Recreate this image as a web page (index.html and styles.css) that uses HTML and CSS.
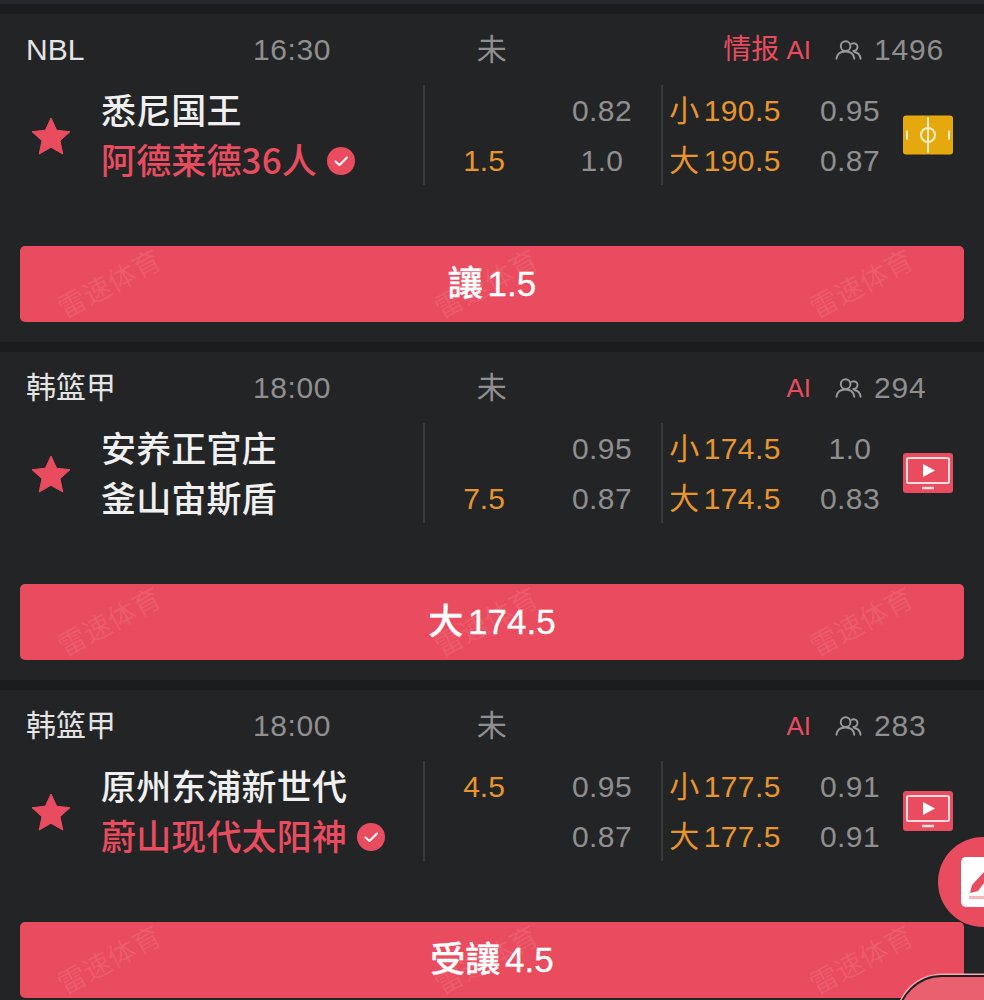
FILE: index.html
```html
<!DOCTYPE html>
<html lang="zh-CN">
<head>
    <meta charset="UTF-8">
    <meta name="viewport" content="width=device-width, initial-scale=1.0">
    <title>雷速体育 - 篮球</title>
    <link rel="stylesheet" href="styles.css">
</head>
<body>
    <svg class="sprites" aria-hidden="true">
        <symbol id="star" viewBox="0 0 40 38">
            <path d="M20 1 25.600 13.200 39 14.700 29 23.700 31.800 37 20 30.300 8.200 37 11 23.700 1 14.700 14.400 13.200Z" fill="#e94c5e" stroke="#e94c5e" stroke-width="1" stroke-linejoin="round"/>
        </symbol>
        <symbol id="people" viewBox="0 0 28 22">
            <g fill="none" stroke="#9a9a9a" stroke-width="2" stroke-linecap="round">
                <circle cx="11" cy="7" r="5"/>
                <path d="M1.500 20c.6-5 4.400-7.500 9.500-7.500s8.400 2.500 9 7.500"/>
                <path d="M17.500 4.500a4 4 0 1 1 1.500 7.500"/>
                <path d="M20 13c3.500.5 6 3 6.500 7"/>
            </g>
        </symbol>
        <symbol id="pitch" viewBox="0 0 50 39">
            <rect width="50" height="39" rx="3" fill="#e5a90e"/>
            <g fill="none" stroke="#fbeec8" stroke-width="2">
                <path d="M25 2V37"/>
                <circle cx="25" cy="19.500" r="7"/>
                <path d="M4 15V24M46 15V24"/>
            </g>
        </symbol>
        <symbol id="tv" viewBox="0 0 50 40">
            <rect width="50" height="40" rx="3" fill="#e94c5e"/>
            <rect x="4" y="5" width="42" height="25" rx="1.500" fill="none" stroke="#fbdde0" stroke-width="2"/>
            <path d="M20 11 32 17.500 20 24Z" fill="#fff"/>
            <path d="M19 35H31" stroke="#fbdde0" stroke-width="2.500"/>
        </symbol>
        <symbol id="check" viewBox="0 0 28 28">
            <circle cx="14" cy="14" r="14" fill="#e94c5e"/>
            <path d="M8.500 14.500 12.500 18 20 10.500" fill="none" stroke="#fff" stroke-width="2" stroke-linecap="round" stroke-linejoin="round"/>
        </symbol>
    </svg>

    <div class="top-strip"></div>

    <div class="match">
        <div class="match-head">
            <span class="league">NBL</span>
            <span class="time">16:30</span>
            <span class="status">未</span>
            <span class="tags"><span class="tag-cn">情报</span> AI</span>
            <span class="viewers"><svg class="icon-people"><use href="#people"/></svg>1496</span>
        </div>
        <div class="match-body">
            <div class="fav"><svg class="icon-star"><use href="#star"/></svg></div>
            <div class="teams">
                <div class="team">悉尼国王</div>
                <div class="team picked">阿德莱德36人<svg class="icon-check"><use href="#check"/></svg></div>
            </div>
            <div class="col col-handicap">
                <div class="cell"></div>
                <div class="cell orange">1.5</div>
            </div>
            <div class="col col-odds">
                <div class="cell">0.82</div>
                <div class="cell">1.0</div>
            </div>
            <div class="col col-total">
                <div class="cell orange">小<span class="line">190.5</span></div>
                <div class="cell orange">大<span class="line">190.5</span></div>
            </div>
            <div class="col col-total-odds">
                <div class="cell">0.95</div>
                <div class="cell">0.87</div>
            </div>
            <div class="media"><svg class="icon-media"><use href="#pitch"/></svg></div>
        </div>
        <div class="tip">
            <span class="tip-label">讓 1.5</span>
            <div class="watermarks"><span>雷速体育</span><span>雷速体育</span><span>雷速体育</span></div>
        </div>
    </div>

    <div class="match">
        <div class="match-head">
            <span class="league">韩篮甲</span>
            <span class="time">18:00</span>
            <span class="status">未</span>
            <span class="tags">AI</span>
            <span class="viewers"><svg class="icon-people"><use href="#people"/></svg>294</span>
        </div>
        <div class="match-body">
            <div class="fav"><svg class="icon-star"><use href="#star"/></svg></div>
            <div class="teams">
                <div class="team">安养正官庄</div>
                <div class="team">釜山宙斯盾</div>
            </div>
            <div class="col col-handicap">
                <div class="cell"></div>
                <div class="cell orange">7.5</div>
            </div>
            <div class="col col-odds">
                <div class="cell">0.95</div>
                <div class="cell">0.87</div>
            </div>
            <div class="col col-total">
                <div class="cell orange">小<span class="line">174.5</span></div>
                <div class="cell orange">大<span class="line">174.5</span></div>
            </div>
            <div class="col col-total-odds">
                <div class="cell">1.0</div>
                <div class="cell">0.83</div>
            </div>
            <div class="media"><svg class="icon-media"><use href="#tv"/></svg></div>
        </div>
        <div class="tip">
            <span class="tip-label">大 174.5</span>
            <div class="watermarks"><span>雷速体育</span><span>雷速体育</span><span>雷速体育</span></div>
        </div>
    </div>

    <div class="match">
        <div class="match-head">
            <span class="league">韩篮甲</span>
            <span class="time">18:00</span>
            <span class="status">未</span>
            <span class="tags">AI</span>
            <span class="viewers"><svg class="icon-people"><use href="#people"/></svg>283</span>
        </div>
        <div class="match-body">
            <div class="fav"><svg class="icon-star"><use href="#star"/></svg></div>
            <div class="teams">
                <div class="team">原州东浦新世代</div>
                <div class="team picked">蔚山现代太阳神<svg class="icon-check"><use href="#check"/></svg></div>
            </div>
            <div class="col col-handicap">
                <div class="cell orange">4.5</div>
                <div class="cell"></div>
            </div>
            <div class="col col-odds">
                <div class="cell">0.95</div>
                <div class="cell">0.87</div>
            </div>
            <div class="col col-total">
                <div class="cell orange">小<span class="line">177.5</span></div>
                <div class="cell orange">大<span class="line">177.5</span></div>
            </div>
            <div class="col col-total-odds">
                <div class="cell">0.91</div>
                <div class="cell">0.91</div>
            </div>
            <div class="media"><svg class="icon-media"><use href="#tv"/></svg></div>
        </div>
        <div class="tip">
            <span class="tip-label">受讓 4.5</span>
            <div class="watermarks"><span>雷速体育</span><span>雷速体育</span><span>雷速体育</span></div>
        </div>
    </div>

    <div class="floats">
        <div class="fab">
            <div class="fab-sheet">
                <svg class="icon-edit" viewBox="0 0 23 50">
                    <path d="M9 36 11 28 23 15 23 26 17 34Z" fill="#e94c5e"/>
                    <rect x="8" y="39" width="15" height="3" fill="#f7b5bc"/>
                </svg>
            </div>
        </div>
        <div class="chat-tab"></div>
    </div>
</body>
</html>
```

FILE: styles.css
```css
:root {
    --bg-color: #1b1c1e;
    --card-bg: #232426;
    --red: #e94c5e;
    --orange: #e8952f;
    --grey: #8f8f8f;
    --line: #38393b;
}

* {
    margin: 0;
    padding: 0;
    box-sizing: border-box;
}

html, body {
    height: 1000px;
    overflow: hidden;
}

body {
    position: relative;
    background-color: var(--bg-color);
    font-family: "Liberation Sans", "Noto Sans CJK SC", sans-serif;
    font-size: 30px;
    color: var(--grey);
}

.sprites {
    display: none;
}

.top-strip {
    height: 4px;
    margin-bottom: 10px;
    background: #26272a;
}

.match {
    height: 328px;
    margin-bottom: 10px;
    background: var(--card-bg);
}

/* header row */
.match-head {
    display: grid;
    grid-template-columns: 206px 120px 280px 179px 1fr;
    align-items: center;
    height: 71px;
    padding-left: 26px;
    line-height: 40px;
}

.league {
    color: #e4e4e4;
}

.time,
.status {
    text-align: center;
    letter-spacing: 0.6px;
}

.tags {
    text-align: right;
    color: var(--red);
    font-size: 26px;
}

.tag-cn {
    font-size: 28px;
}

.viewers {
    display: flex;
    align-items: center;
    gap: 12px;
    padding-left: 24px;
    letter-spacing: 0.8px;
}

.icon-people {
    width: 27px;
    height: 22px;
}

/* teams and odds */
.match-body {
    display: flex;
    height: 100px;
}

.fav {
    display: flex;
    align-items: center;
    justify-content: center;
    width: 101px;
    padding-top: 1px;
}

.icon-star {
    width: 40px;
    height: 38px;
}

.teams {
    width: 322px;
}

.team {
    display: flex;
    align-items: center;
    height: 50px;
    padding-bottom: 3px;
    color: #f0f0f0;
    font-family: "Noto Sans CJK SC", sans-serif;
    font-size: 35px;
    font-weight: 500;
    letter-spacing: 0.15px;
}

.team.picked {
    color: var(--red);
}

.icon-check {
    width: 28px;
    height: 28px;
    margin: 5px 0 0 10px;
}

.col {
    flex: none;
}

.cell {
    height: 50px;
    padding-top: 1px;
    line-height: 50px;
    text-align: center;
    letter-spacing: 0.4px;
}

.orange {
    color: var(--orange);
}

.line {
    margin-left: 4px;
}

.col-handicap {
    width: 120px;
    border-left: 2px solid var(--line);
}

.col-handicap .cell {
    letter-spacing: 0;
}

.col-odds {
    width: 118px;
}

.col-total {
    width: 126px;
    border-left: 2px solid var(--line);
}

.col-total-odds {
    width: 100px;
    margin-left: 13px;
}

.media {
    display: flex;
    align-items: center;
    padding-left: 3px;
}

.icon-media {
    width: 50px;
    height: 40px;
}

/* tip button */
.tip {
    position: relative;
    display: flex;
    align-items: center;
    justify-content: center;
    height: 76px;
    margin: 61px 20px 0;
    border-radius: 5px;
    background: var(--red);
}

.tip-label {
    color: #fff;
    font-size: 35px;
    line-height: 40px;
    font-weight: 500;
    word-spacing: -5px;
    -webkit-text-stroke: 0.3px #fff;
}

.watermarks {
    position: absolute;
    inset: 0;
}

.watermarks span {
    position: absolute;
    top: 24px;
    color: rgba(255, 255, 255, 0.09);
    font-size: 28px;
    line-height: 30px;
    white-space: nowrap;
    transform: rotate(-28deg);
}

.watermarks span:nth-child(1) {
    left: 34px;
}

.watermarks span:nth-child(2) {
    left: 411px;
}

.watermarks span:nth-child(3) {
    left: 786px;
}

/* floating buttons */
.floats {
    position: absolute;
    inset: 0;
    overflow: hidden;
    pointer-events: none;
}

.fab {
    position: absolute;
    left: 938px;
    top: 837px;
    display: flex;
    align-items: center;
    width: 90px;
    height: 90px;
    padding-left: 23px;
    border-radius: 50%;
    background: var(--red);
}

.fab-sheet {
    width: 50px;
    height: 50px;
    border-radius: 5px;
    background: #fff;
}

.icon-edit {
    display: block;
    width: 23px;
    height: 50px;
}

.chat-tab {
    position: absolute;
    left: 897px;
    top: 975px;
    width: 160px;
    height: 90px;
    border: 2px solid #1f1f21;
    border-radius: 46px;
    background: #e9606e;
    box-shadow: 0 0 0 1.500px #f4aab2;
}
```
